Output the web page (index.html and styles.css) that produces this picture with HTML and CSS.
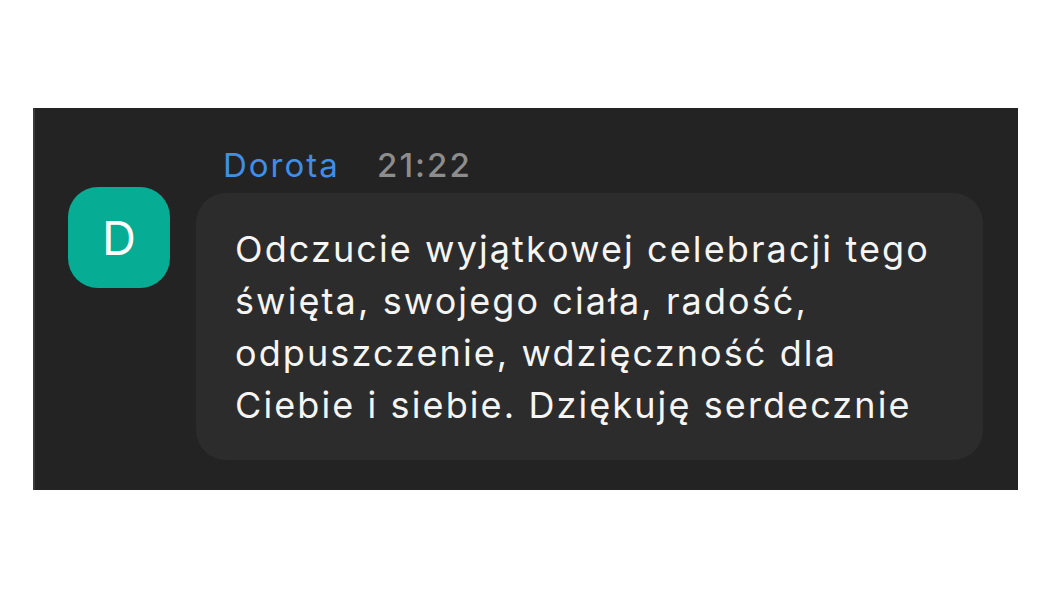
FILE: index.html
```html
<!DOCTYPE html>
<html lang="pl">
<head>
    <meta charset="UTF-8">
    <title>Dorota</title>
    <link rel="stylesheet" href="styles.css">
</head>
<body>
    <div class="chat">
        <div class="message">
            <div class="avatar">D</div>
            <div class="content">
                <div class="meta">
                    <span class="author">Dorota</span>
                    <span class="time">21:22</span>
                </div>
                <div class="bubble">
                    Odczucie wyjątkowej celebracji tego<br>
                    święta, swojego ciała, radość,<br>
                    odpuszczenie, wdzięczność dla<br>
                    Ciebie i siebie. Dziękuję serdecznie
                </div>
            </div>
        </div>
    </div>
</body>
</html>
```

FILE: styles.css
```css
body {
    margin: 0;
    background: #fff;
    font-family: Inter, "Noto Sans", sans-serif;
}
.chat {
    margin: 108px 0 0 33px;
    width: 985px;
    height: 382px;
    box-sizing: border-box;
    background: #232323;
    border-left: 2px solid #3a3a3a;
    padding: 37px 0 0 33px;
}
.message {
    display: flex;
    gap: 26px;
}
.avatar {
    margin-top: 42px;
    width: 102px;
    height: 101px;
    flex-shrink: 0;
    border-radius: 30px;
    background: #06ad94;
    color: #fff;
    font-size: 47px;
    display: flex;
    align-items: center;
    justify-content: center;
}
.content {
    width: 787px;
}
.meta {
    padding-left: 27px;
    height: 48px;
    font-size: 33px;
    line-height: 40px;
    letter-spacing: 2px;
    white-space: nowrap;
}
.author {
    color: #3f8fe8;
}
.time {
    color: #8d8d8d;
    font-weight: 500;
    margin-left: 26px;
}
.bubble {
    background: #2c2c2c;
    border-radius: 30px;
    padding: 30px 20px 29px 39px;
    color: #f5f5f5;
    font-size: 36px;
    line-height: 52px;
    letter-spacing: 2.1px;
    white-space: nowrap;
}
```
